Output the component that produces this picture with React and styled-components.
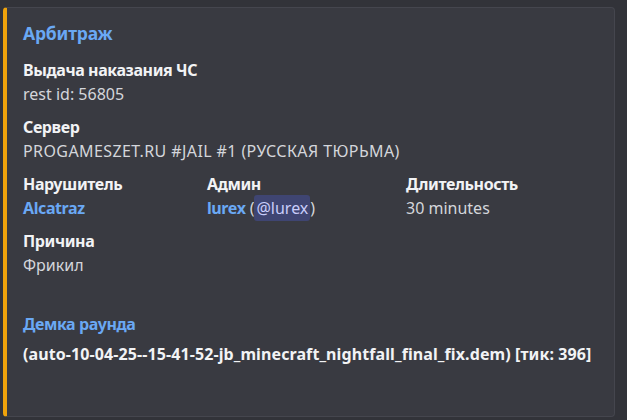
import React from 'react';
import styled, { createGlobalStyle } from 'styled-components';

const GlobalStyle = createGlobalStyle`
    html, body {
        margin: 0;
        padding: 0;
        background: #323339;
    }
    body {
        font-family: "Noto Sans", "Open Sans", sans-serif;
        -webkit-font-smoothing: antialiased;
    }
`;

const Page = styled.div`
    padding: 7px 12px 3px 3px;
    width: 627px;
    height: 420px;
    box-sizing: border-box;
`;

const Embed = styled.article`
    display: flex;
    flex-direction: column;
    box-sizing: border-box;
    height: 410px;
    background: #393a41;
    border: 1px solid #45464e;
    border-left: 4px solid #f0a30b;
    border-radius: 4px;
    padding: 13px 16px 16px 16px;
    color: #dbdee1;
`;

const Title = styled.div`
    font-size: 17.5px;
    font-weight: 700;
    line-height: 24px;
    color: #6aa8f4;
    letter-spacing: -0.2px;
    margin-bottom: 15px;
`;

const Fields = styled.div`
    display: grid;
    grid-template-columns: 184px 199px 1fr;
    row-gap: 13px;
`;

const Field = styled.div`
    grid-column: ${props => (props.inline ? 'auto' : '1 / -1')};
    display: flex;
    flex-direction: column;
    gap: 4px;
`;

const Name = styled.div`
    font-size: 16px;
    font-weight: 700;
    line-height: 20px;
    color: #f2f3f5;
    letter-spacing: -0.4px;
`;

const Value = styled.div`
    font-size: 16px;
    line-height: 20px;
    color: #d4d6db;
    letter-spacing: ${props => props.spacing || '0px'};
    white-space: nowrap;
`;

const Link = styled.span`
    color: #6aa8f4;
    font-weight: 700;
    letter-spacing: -0.4px;
`;

const Mention = styled.span`
    background: #3f4572;
    color: #c9cdfb;
    border-radius: 3px;
    padding: 2px 2px;
`;

const Demo = styled.div`
    margin-top: 39px;
    display: flex;
    flex-direction: column;
    gap: 10px;
`;

const DemoLink = styled.div`
    font-size: 16px;
    font-weight: 700;
    line-height: 20px;
    color: #6aa8f4;
    letter-spacing: -0.4px;
`;

const DemoFile = styled.div`
    font-size: 16px;
    font-weight: 700;
    line-height: 20px;
    color: #f2f3f5;
    letter-spacing: 0.1px;
    white-space: nowrap;
`;

export default function App() {
    return (
        <Page>
            <GlobalStyle />
            <Embed>
                <Title>Арбитраж</Title>
                <Fields>
                    <Field>
                        <Name>Выдача наказания ЧС</Name>
                        <Value>rest id: 56805</Value>
                    </Field>
                    <Field>
                        <Name>Сервер</Name>
                        <Value spacing="0.4px">PROGAMESZET.RU #JAIL #1 (РУССКАЯ ТЮРЬМА)</Value>
                    </Field>
                    <Field inline>
                        <Name>Нарушитель</Name>
                        <Value><Link>Alcatraz</Link></Value>
                    </Field>
                    <Field inline>
                        <Name>Админ</Name>
                        <Value><Link>lurex</Link> (<Mention>@lurex</Mention>)</Value>
                    </Field>
                    <Field inline>
                        <Name>Длительность</Name>
                        <Value>30 minutes</Value>
                    </Field>
                    <Field>
                        <Name>Причина</Name>
                        <Value>Фрикил</Value>
                    </Field>
                </Fields>
                <Demo>
                    <DemoLink>Демка раунда</DemoLink>
                    <DemoFile>(auto-10-04-25--15-41-52-jb_minecraft_nightfall_final_fix.dem) [тик: 396]</DemoFile>
                </Demo>
            </Embed>
        </Page>
    );
}
